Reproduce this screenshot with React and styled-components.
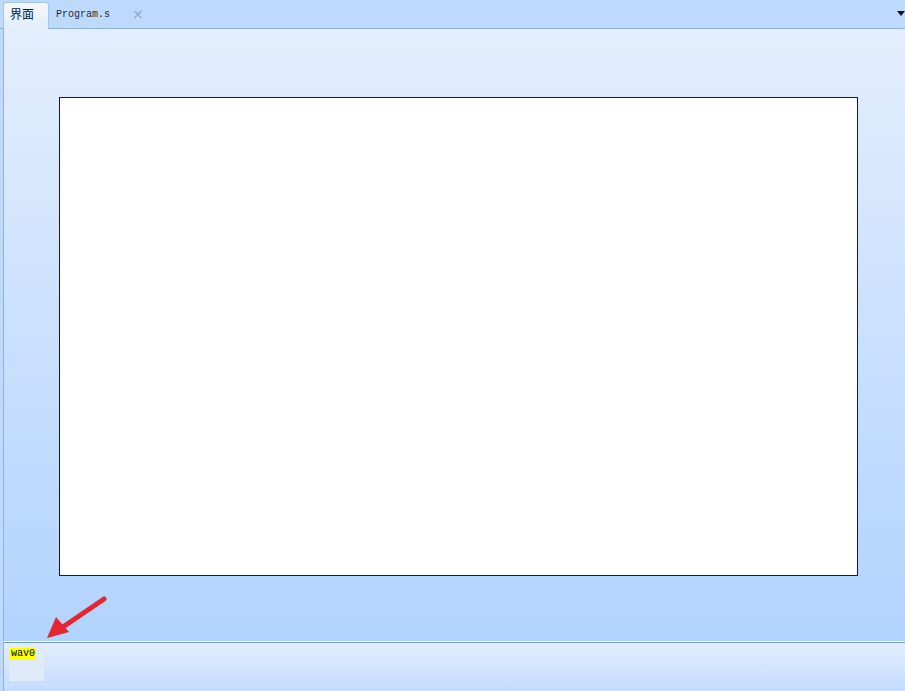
import React from "react";
import styled, { createGlobalStyle } from "styled-components";

const GlobalStyle = createGlobalStyle`
  html, body {
    margin: 0;
    padding: 0;
    overflow: hidden;
  }
  body {
    font-family: "Noto Sans CJK SC", "Liberation Sans", sans-serif;
  }
`;

const Screen = styled.div`
  position: relative;
  width: 905px;
  height: 691px;
  display: flex;
  flex-direction: column;
  background: #bdd9fc;
  overflow: hidden;
`;

const TabBar = styled.div`
  height: 28px;
  display: flex;
  align-items: flex-end;
  padding-left: 3px;
  border-bottom: 1px solid #8db6de;
  position: relative;
  flex-shrink: 0;
`;

const Tab = styled.div`
  height: ${(p) => (p.active ? "27px" : "26px")};
  display: flex;
  align-items: center;
  padding: 0 6px ${(p) => (p.active ? "4px" : "3px")};
  box-sizing: border-box;
  margin-bottom: ${(p) => (p.active ? "-1px" : "0")};
  border: ${(p) => (p.active ? "1px solid #a6c6e8" : "1px solid transparent")};
  border-bottom: none;
  border-radius: 3px 3px 0 0;
  background: ${(p) =>
    p.active ? "linear-gradient(#f4f8fe, #e1edfd)" : "transparent"};
  gap: 22px;
`;

const CjkLabel = styled.span`
  font-family: "Noto Sans CJK SC", sans-serif;
  font-size: 12px;
  line-height: 14px;
  color: #0a1a33;
  width: 32px;
`;

const MonoLabel = styled.span`
  font-family: "Liberation Mono", monospace;
  font-size: 10px;
  color: #1b2d4a;
`;

const Close = styled.span`
  font-family: "DejaVu Sans", sans-serif;
  font-size: 14px;
  color: #8ea7c4;
  line-height: 1;
`;

const DropArrow = styled.div`
  position: absolute;
  right: 0;
  top: 11px;
  width: 0;
  height: 0;
  border-left: 4px solid transparent;
  border-right: 4px solid transparent;
  border-top: 5px solid #111;
`;

const Body = styled.div`
  flex: 1;
  display: flex;
  margin-left: 3px;
  border-left: 1px solid #8db6de;
  background: linear-gradient(#e3eefd 0%, #cfe3fe 40%, #b2d3ff 100%);
  padding: 68px 0 0 55px;
  box-sizing: border-box;
`;

const Canvas = styled.div`
  width: 799px;
  height: 479px;
  background: #ffffff;
  border: 1px solid #10106a;
  box-sizing: border-box;
`;

const Dock = styled.div`
  height: 50px;
  flex-shrink: 0;
  margin-left: 3px;
  border-left: 1px solid #8db6de;
  border-top: 1px solid #f4f8ff;
  box-shadow: inset 0 1px 0 #6f9ac6;
  background: linear-gradient(#e2eefe, #c4dcff);
  display: flex;
  align-items: flex-start;
  padding: 4px 0 0 5px;
  box-sizing: border-box;
`;

const DockItem = styled.div`
  width: 35px;
  height: 35px;
  background: #dfeafb;
  display: flex;
  align-items: flex-start;
  padding: 2px 0 0 1px;
  box-sizing: border-box;
`;

const WavTag = styled.span`
  font-family: "Liberation Mono", monospace;
  font-size: 10px;
  line-height: 12px;
  background: #ffff00;
  color: #000;
  padding: 0 1px;
`;

const Overlay = styled.svg`
  position: absolute;
  left: 0;
  top: 0;
  pointer-events: none;
`;

export default function App() {
  return (
    <>
      <GlobalStyle />
      <Screen>
        <TabBar>
          <Tab active>
            <CjkLabel>界面</CjkLabel>
          </Tab>
          <Tab>
            <MonoLabel>Program.s</MonoLabel>
            <Close>×</Close>
          </Tab>
          <DropArrow />
        </TabBar>
        <Body>
          <Canvas />
        </Body>
        <Dock>
          <DockItem>
            <WavTag>wav0</WavTag>
          </DockItem>
        </Dock>
        <Overlay width="905" height="691" viewBox="0 0 905 691">
          <line x1="104" y1="599" x2="60" y2="629" stroke="#e52530" strokeWidth="5" strokeLinecap="round" />
          <polygon points="47,638 56,617 69,632" fill="#e52530" />
        </Overlay>
      </Screen>
    </>
  );
}
